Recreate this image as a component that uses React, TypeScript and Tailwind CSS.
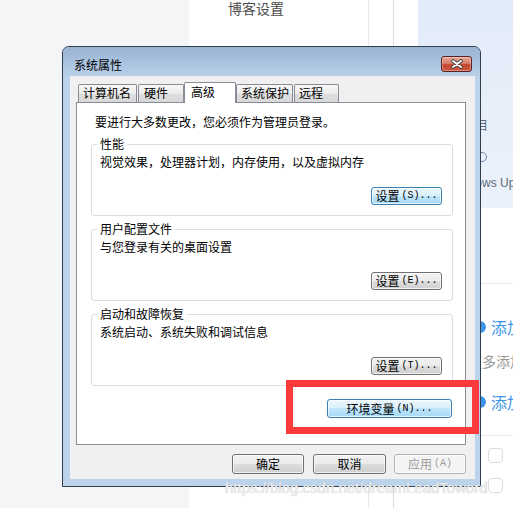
import React from 'react';

const cjk = "font-['Noto_Sans_CJK_SC',sans-serif]";
const mono = "font-['Liberation_Mono',monospace]";

const grayBtn =
  'border-[#707070] bg-[linear-gradient(to_bottom,#f2f2f2_0%,#ebebeb_50%,#dddddd_50%,#cfcfcf_100%)]';
const blueBtn =
  'border-[#3c7fb1] bg-[linear-gradient(to_bottom,#eaf6fd_0%,#d9f0fc_50%,#bee6fd_50%,#a7d9f5_100%)]';

function Button({
  label,
  hotkey,
  dots = true,
  className = '',
  blue = false,
  disabled = false,
}: {
  label: string;
  hotkey?: string;
  dots?: boolean;
  className?: string;
  blue?: boolean;
  disabled?: boolean;
}) {
  const look = disabled
    ? 'border-[#adb2b5] bg-[#f4f4f4] text-[#9a9a9a]'
    : `${blue ? blueBtn : grayBtn} text-black`;
  return (
    <div
      className={`flex items-center justify-center rounded-[3px] border shadow-[inset_0_0_0_1px_rgba(255,255,255,0.7)] text-[12px] leading-[12px] ${look} ${className}`}
    >
      <span>{label}</span>
      {hotkey && (
        <span className={`${mono} text-[10px] leading-[10px] ml-[2px]`}>
          ({hotkey}){dots ? '...' : ''}
        </span>
      )}
    </div>
  );
}

function Group({ title, desc, children }: { title: string; desc: string; children: React.ReactNode }) {
  return (
    <div className="relative h-[72px] border border-[#d5dfe5] rounded-[3px] flex flex-col pl-[8px] pt-[11px] pr-[10px] pb-[10px]">
      <span className="absolute left-[5px] -top-[7px] bg-white px-[3px] text-[12px] leading-[12px]">{title}</span>
      <div className="text-[12px] leading-[12px]">{desc}</div>
      <div className="mt-auto self-end">{children}</div>
    </div>
  );
}

function Tab({ children, className = '' }: { children: React.ReactNode; className?: string }) {
  return (
    <div
      className={`h-[18px] border border-b-0 border-[#898c95] rounded-t-[2px] bg-[linear-gradient(to_bottom,#f7f7f7_0%,#ececec_50%,#dedede_55%,#d8d8d8_100%)] pl-[4px] pt-[2px] text-[12px] leading-[12px] whitespace-nowrap ${className}`}
    >
      {children}
    </div>
  );
}

function CloseButton() {
  return (
    <div className="absolute right-[8px] top-[9px] w-[31px] h-[16px] rounded-[3px] border border-[#5b2323] bg-[linear-gradient(to_bottom,#e9a897_0%,#d8806c_45%,#c4462f_55%,#cc5a40_100%)] shadow-[inset_0_0_0_1px_rgba(255,255,255,0.3)] flex items-center justify-center">
      <svg width="14" height="10" viewBox="0 0 14 10">
        <path d="M3 2 L11 8 M11 2 L3 8" stroke="#3d3d3d" strokeWidth="3.6" strokeLinecap="round" />
        <path d="M3 2 L11 8 M11 2 L3 8" stroke="#ffffff" strokeWidth="2" strokeLinecap="round" />
      </svg>
    </div>
  );
}

export default function App() {
  return (
    <div className={`relative w-[513px] h-[508px] overflow-hidden flex bg-white ${cjk}`}>
      {/* Page behind the dialog */}
      <div className="w-[189px] shrink-0 bg-[#f4f5f7]" />
      <div className="w-[180px] shrink-0 border-r border-[#e8e8e8] pl-[39px] pt-[1px] text-[#4d4d4d]">
        <div className="text-[14px] leading-[14px]">博客设置</div>
        <div className="mt-[30px] text-[14px] leading-[14px]">账号设置</div>
      </div>
      <div className="w-[25px] shrink-0 border-r border-[#dcdcdc]" />
      <div className="w-[24px] shrink-0" />
      <div className="flex-1 flex flex-col">
        <div className="h-[208px] shrink-0 bg-gradient-to-b from-[#e2ebf8] to-[#ebf2fc] pl-[58px] pt-[118px] text-[#5b6b7d]">
          <div className="text-[12px] leading-[14px]">目</div>
          <div className="mt-[20px] ml-[1px] w-[10px] h-[10px] rounded-full border border-[#6f88a8]" />
          <div className="mt-[14px] -ml-[28px] text-[12px] leading-[14px] font-['Liberation_Sans',sans-serif] whitespace-nowrap">
            Windows Update
          </div>
        </div>
        <div className="flex-1 flex flex-col pl-[56px]">
          <div className="mt-[75px] -ml-[56px] h-px bg-[#e8e8e8]" />
          <div className="mt-[35px] h-[16px] flex items-center gap-[5px]">
            <span className="w-[12px] h-[12px] shrink-0 rounded-full bg-[#3d95e8]" />
            <span className="text-[16px] leading-[16px] text-[#3d95e8] whitespace-nowrap">添加</span>
          </div>
          <div className="mt-[19px] -ml-[6px] text-[14px] leading-[14px] text-[#9a9a9a] whitespace-nowrap">更多添加</div>
          <div className="mt-[26px] h-[16px] flex items-center gap-[5px]">
            <span className="w-[12px] h-[12px] shrink-0 rounded-full bg-[#3d95e8]" />
            <span className="text-[16px] leading-[16px] text-[#3d95e8] whitespace-nowrap">添加</span>
          </div>
          <div className="mt-[25px] -ml-[56px] h-px bg-[#e8e8e8]" />
          <div className="mt-[12px] ml-[14px] w-[15px] h-[15px] rounded-[4px] border border-[#dcdcdc]" />
          <div className="mt-[15px] ml-[14px] w-[15px] h-[15px] rounded-[4px] border border-[#dcdcdc]" />
        </div>
      </div>

      {/* System properties dialog */}
      <div className="absolute left-[62px] top-[46px] w-[419px] h-[441px] rounded-t-[7px] border border-[#2f3d4d] bg-[#bcd3ec] flex flex-col overflow-hidden">
        <div className="h-[29px] shrink-0 relative bg-gradient-to-b from-[#99b3d1] to-[#b9d0ea] pl-[11px] pt-[12px]">
          <div className="text-[12px] leading-[12px] text-black">系统属性</div>
          <CloseButton />
        </div>
        <div className="flex-1 ml-[7px] mr-[5px] mb-[7px] bg-[#f0f0f0] flex flex-col">
          <div className="ml-[6px] mt-[6px] w-[390px]">
            {/* Tabs */}
            <div className="relative z-10 h-[20px] flex items-end pl-[2px]">
              <Tab className="w-[59px]">计算机名</Tab>
              <Tab className="w-[46px] ml-px pl-[5px]">硬件</Tab>
              <div className="w-[52px] h-[21px] -mb-px bg-white border border-b-0 border-[#898c95] rounded-t-[2px] pl-[6px] pt-[3px] text-[12px] leading-[12px]">
                高级
              </div>
              <Tab className="w-[57px]">系统保护</Tab>
              <Tab className="w-[45px] ml-px">远程</Tab>
            </div>

            {/* Panel */}
            <div className="h-[343px] border border-[#898c95] bg-white flex flex-col pl-[14px] pr-[12px] pt-[13px]">
              <div className="pl-[4px] text-[12px] leading-[12px]">要进行大多数更改，您必须作为管理员登录。</div>
              <div className="mt-[16px]">
                <Group title="性能" desc="视觉效果，处理器计划，内存使用，以及虚拟内存">
                  <Button label="设置" hotkey="S" blue className="w-[71px] h-[18px]" />
                </Group>
              </div>
              <div className="mt-[13px]">
                <Group title="用户配置文件" desc="与您登录有关的桌面设置">
                  <Button label="设置" hotkey="E" className="w-[71px] h-[18px]" />
                </Group>
              </div>
              <div className="mt-[13px]">
                <Group title="启动和故障恢复" desc="系统启动、系统失败和调试信息">
                  <Button label="设置" hotkey="T" className="w-[71px] h-[18px]" />
                </Group>
              </div>
              <div className="mt-[13px] self-end mr-px">
                <Button label="环境变量" hotkey="N" blue className="w-[125px] h-[19px]" />
              </div>
            </div>
          </div>

          {/* Bottom buttons */}
          <div className="mt-[9px] h-[20px] flex justify-end pr-[9px]">
            <Button label="确定" className="w-[72px] h-[20px]" />
            <Button label="取消" className="w-[73px] h-[20px] ml-[9px]" />
            <Button label="应用" hotkey="A" dots={false} disabled className="w-[72px] h-[20px] ml-[8px]" />
          </div>
        </div>
      </div>

      {/* Red annotation box */}
      <div className="absolute left-[286px] top-[380px] w-[193px] h-[54px] border-[7px] border-[#fb3b3b]" />

      {/* Watermark */}
      <div className="absolute left-[225px] top-[479px] text-[15px] leading-[18px] font-['Liberation_Sans',sans-serif] text-[#efefef] [text-shadow:0_0_1px_#b4b4b4] whitespace-nowrap">
        https://blog.csdn.net/dreamLeadToword
      </div>
    </div>
  );
}
